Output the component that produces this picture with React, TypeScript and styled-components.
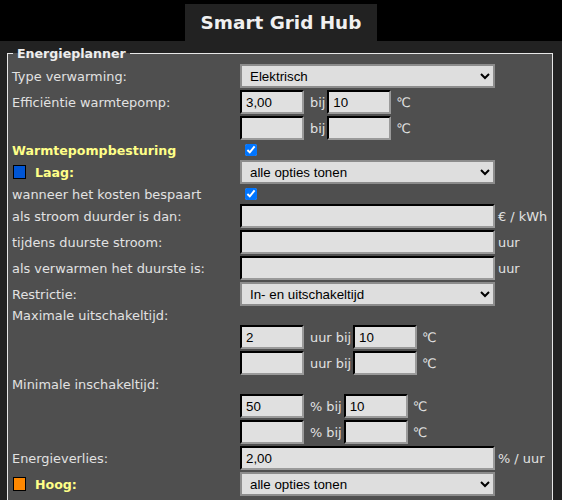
import React from 'react';
import styled, { createGlobalStyle } from 'styled-components';

const GlobalStyle = createGlobalStyle`
  html, body {
    margin: 0;
    padding: 0;
    background: #000000;
  }
  body {
    font-family: "DejaVu Sans", Verdana, sans-serif;
    font-size: 12.9px;
    color: #e2e2e2;
  }
`;

const Header = styled.header`
  display: flex;
  justify-content: center;
  padding-top: 4px;
  background: #000000;
`;

const Tab = styled.h1`
  margin: 0;
  height: 37px;
  padding: 0 16px;
  display: flex;
  align-items: center;
  background: #222222;
  color: #f0f0f0;
  font-family: "DejaVu Sans", Verdana, sans-serif;
  font-size: 18.4px;
  font-weight: bold;
`;

const Main = styled.main`
  background: #222222;
  padding: 5px 9px 0 7px;
  min-height: 460px;
`;

const Fieldset = styled.fieldset`
  margin: 0;
  padding: 3px 4px 10px 4px;
  border: 1px solid #e8e8e8;
  background: #4f4f4f;
`;

const Legend = styled.legend`
  margin-left: 1px;
  padding: 0 4px;
  font-size: 12.6px;
  font-weight: bold;
  color: #eeeeee;
`;

const Form = styled.div`
  display: grid;
  grid-template-columns: 228px 1fr;
  row-gap: 2px;
  align-items: center;
`;

const Label = styled.div<{ $height?: number }>`
  display: flex;
  align-items: center;
  height: ${({ $height }) => ($height ? `${$height}px` : 'auto')};
  white-space: nowrap;
`;

const Heading = styled(Label)`
  color: #ffff88;
  font-size: 12.6px;
  font-weight: bold;
`;

const Swatch = styled.span<{ $color: string }>`
  display: inline-block;
  width: 11px;
  height: 12px;
  margin: 0 9px 0 1px;
  border: 1px solid #000000;
  background: ${({ $color }) => $color};
`;

const Control = styled.div`
  display: flex;
  align-items: center;
  white-space: nowrap;
`;

const Select = styled.select`
  box-sizing: border-box;
  width: 255px;
  height: 24px;
  margin: 0;
  padding: 0 4px;
  background: #dedede;
  border: 2px solid #8c8c8c;
  border-radius: 0;
  color: #000000;
  font-family: "Liberation Sans", Arial, sans-serif;
  font-size: 13.333px;
`;

const Input = styled.input<{ $wide?: boolean }>`
  box-sizing: border-box;
  width: ${({ $wide }) => ($wide ? '255px' : '64px')};
  height: 24px;
  margin: 0;
  padding: 0 4px;
  background: #e0e0e0;
  border: 2px inset #9a9a9a;
  border-top-color: #2a2a2a;
  border-left-color: #2a2a2a;
  color: #000000;
  font-family: "Liberation Sans", Arial, sans-serif;
  font-size: 13.333px;
`;

const Check = styled.input`
  width: 12px;
  height: 12px;
  margin: 0 0 0 5px;
  accent-color: #0075ff;
`;

const Between = styled.span`
  margin: 0 2px 0 6px;
`;

const Unit = styled.span`
  margin-left: 5px;
`;

const TrailUnit = styled.span`
  margin-left: 3px;
`;

type PairProps = { word: string; a?: string; b?: string };

const PairRow: React.FC<PairProps> = ({ word, a = '', b = '' }) => (
  <>
    <Label />
    <Control>
      <Input defaultValue={a} />
      <Between>{word}</Between>
      <Input defaultValue={b} />
      <Unit>℃</Unit>
    </Control>
  </>
);

export default function App() {
  return (
    <>
      <GlobalStyle />
      <Header>
        <Tab>Smart Grid Hub</Tab>
      </Header>
      <Main>
        <Fieldset>
          <Legend>Energieplanner</Legend>
          <Form>
            <Label>Type verwarming:</Label>
            <Control>
              <Select defaultValue="elektrisch">
                <option value="elektrisch">Elektrisch</option>
                <option value="warmtepomp">Warmtepomp</option>
              </Select>
            </Control>

            <Label>Efficiëntie warmtepomp:</Label>
            <Control>
              <Input defaultValue="3,00" />
              <Between>bij</Between>
              <Input defaultValue="10" />
              <Unit>℃</Unit>
            </Control>
            <PairRow word="bij" />

            <Heading $height={16}>Warmtepompbesturing</Heading>
            <Control>
              <Check type="checkbox" defaultChecked />
            </Control>

            <Heading>
              <Swatch $color="#0055d4" />
              Laag:
            </Heading>
            <Control>
              <Select defaultValue="alle">
                <option value="alle">alle opties tonen</option>
              </Select>
            </Control>

            <Label $height={16}>wanneer het kosten bespaart</Label>
            <Control>
              <Check type="checkbox" defaultChecked />
            </Control>

            <Label>als stroom duurder is dan:</Label>
            <Control>
              <Input $wide />
              <TrailUnit>€ / kWh</TrailUnit>
            </Control>

            <Label>tijdens duurste stroom:</Label>
            <Control>
              <Input $wide />
              <TrailUnit>uur</TrailUnit>
            </Control>

            <Label>als verwarmen het duurste is:</Label>
            <Control>
              <Input $wide />
              <TrailUnit>uur</TrailUnit>
            </Control>

            <Label>Restrictie:</Label>
            <Control>
              <Select defaultValue="inuit">
                <option value="inuit">In- en uitschakeltijd</option>
              </Select>
            </Control>

            <Label $height={15}>Maximale uitschakeltijd:</Label>
            <Control />
            <PairRow word="uur bij" a="2" b="10" />
            <PairRow word="uur bij" />

            <Label $height={15}>Minimale inschakeltijd:</Label>
            <Control />
            <PairRow word="% bij" a="50" b="10" />
            <PairRow word="% bij" />

            <Label>Energieverlies:</Label>
            <Control>
              <Input $wide defaultValue="2,00" />
              <TrailUnit>% / uur</TrailUnit>
            </Control>

            <Heading>
              <Swatch $color="#ff8800" />
              Hoog:
            </Heading>
            <Control>
              <Select defaultValue="alle">
                <option value="alle">alle opties tonen</option>
              </Select>
            </Control>
          </Form>
        </Fieldset>
      </Main>
    </>
  );
}
